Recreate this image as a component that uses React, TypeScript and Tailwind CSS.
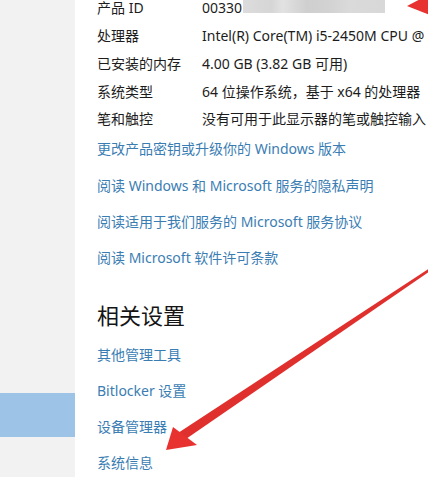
const FONT = "font-['Segoe_UI','Noto_Sans','Noto_Sans_CJK_SC',sans-serif]";

const specs = [
  { label: "产品 ID", value: "00330" },
  { label: "处理器", value: "Intel(R) Core(TM) i5-2450M CPU @ 2.50GHz" },
  { label: "已安装的内存", value: "4.00 GB (3.82 GB 可用)" },
  { label: "系统类型", value: "64 位操作系统，基于 x64 的处理器" },
  { label: "笔和触控", value: "没有可用于此显示器的笔或触控输入" },
];

const aboutLinks = [
  "更改产品密钥或升级你的 Windows 版本",
  "阅读 Windows 和 Microsoft 服务的隐私声明",
  "阅读适用于我们服务的 Microsoft 服务协议",
  "阅读 Microsoft 软件许可条款",
];

const relatedLinks = ["其他管理工具", "Bitlocker 设置", "设备管理器", "系统信息"];

function Arrows() {
  return (
    <svg className="absolute inset-0 pointer-events-none" width="428" height="477" viewBox="0 0 428 477">
      {/* top-right arrowhead, mostly off-screen */}
      <polygon points="407,6 430,-6 430,15" fill="#e8322f" />
      {/* long arrow toward 系统信息 */}
      <polygon points="430,268 430,271 183,441 178,433" fill="#e0302e" />
      <polygon points="166,450 173,427 197,445" fill="#e8322f" />
    </svg>
  );
}

export default function App() {
  return (
    <div className={`relative w-[428px] h-[477px] overflow-hidden bg-white flex ${FONT}`}>
      <aside className="w-[75px] shrink-0 bg-[#f2f2f2] flex flex-col">
        <div className="h-[393px]" />
        <div className="h-[44px] bg-[#9dc3e6]" />
      </aside>

      <main className="flex-1 pl-[22px] flex flex-col">
        <div className="flex flex-col -mt-[6px]">
          {specs.map((s, i) => (
            <div key={s.label} className="h-[27.75px] flex items-center text-[14px] text-[#1c1c1c] whitespace-nowrap">
              <span className="w-[105px] shrink-0">{s.label}</span>
              {i === 0 ? (
                <span className="flex items-center">
                  {s.value}
                  <span className="ml-[1px] -mt-[12px] h-[22px] w-[142px] bg-[linear-gradient(90deg,#dcdcdc_0%,#d6d6d6_20%,#e2e2e2_28%,#cfcfcf_45%,#d2d2d2_60%,#dadada_75%,#d8d8d8_100%)]" />
                </span>
              ) : (
                <span>{s.value}</span>
              )}
            </div>
          ))}
        </div>

        <div className="flex flex-col -mt-[2px]">
          {aboutLinks.map((l) => (
            <div key={l} className="h-[36.3px] flex items-center text-[14px] text-[#3a7db3] whitespace-nowrap">
              {l}
            </div>
          ))}
        </div>

        <h2 className="mt-[23px] h-[36px] flex items-center text-[22px] text-[#141414] font-normal">相关设置</h2>

        <div className="flex flex-col mt-[4px]">
          {relatedLinks.map((l) => (
            <div key={l} className="h-[36.3px] flex items-center text-[14px] text-[#3a7db3] whitespace-nowrap">
              {l}
            </div>
          ))}
        </div>
      </main>

      <Arrows />
    </div>
  );
}
